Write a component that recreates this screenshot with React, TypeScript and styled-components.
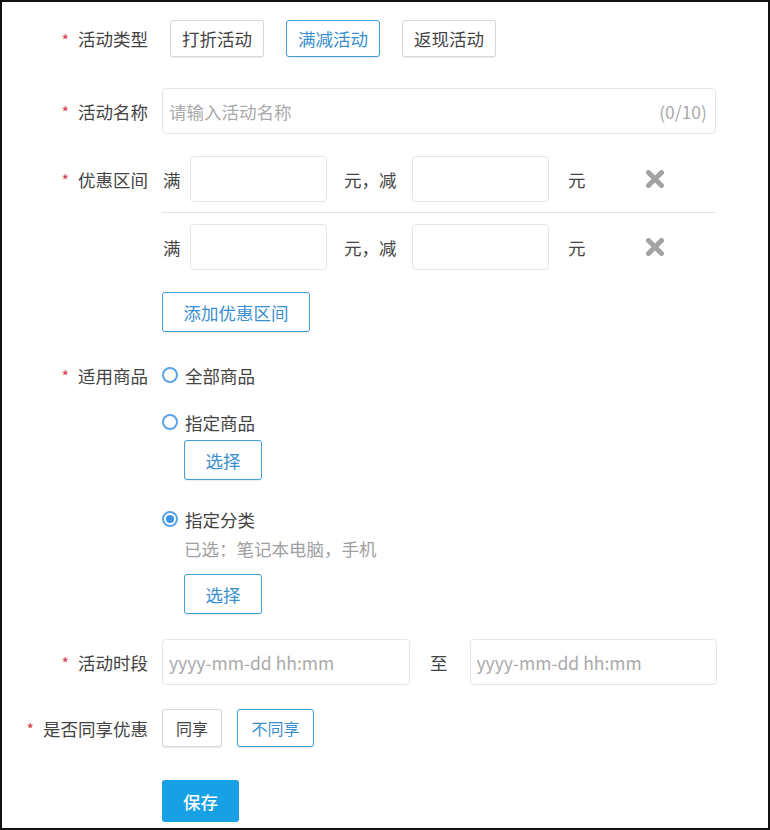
import styled, { createGlobalStyle } from "styled-components";

const GlobalStyle = createGlobalStyle`
  html, body {
    margin: 0;
    padding: 0;
    background: #fff;
  }
  body {
    font-family: "Noto Sans CJK SC", "Noto Sans", sans-serif;
    color: #444;
  }
  * {
    box-sizing: border-box;
  }
`;

const Frame = styled.div`
  width: 770px;
  height: 830px;
  border: 2px solid #111;
  padding-top: 18px;
  background: #fff;
`;

const FormItem = styled.div<{ $mb: number }>`
  display: flex;
  align-items: flex-start;
  margin-bottom: ${(p) => p.$mb}px;
`;

const Label = styled.div<{ $h: number }>`
  width: 146px;
  height: ${(p) => p.$h}px;
  margin-right: 14px;
  display: flex;
  align-items: center;
  justify-content: flex-end;
  font-size: 17.5px;
  color: #444;
  white-space: nowrap;
  flex-shrink: 0;
`;

const Star = styled.span`
  color: #d2414b;
  font-size: 16px;
  line-height: 1;
  margin-right: 9px;
  padding-top: 2px;
`;

const Control = styled.div`
  width: 554px;
  display: flex;
  flex-direction: column;
  align-items: flex-start;
`;

const ButtonGroup = styled.div<{ $gap: number; $pl?: number }>`
  display: flex;
  gap: ${(p) => p.$gap}px;
  padding-left: ${(p) => p.$pl || 0}px;
`;

const Button = styled.button<{ $w: number; $h: number; $active?: boolean; $fs?: number; $mt?: number }>`
  width: ${(p) => p.$w}px;
  height: ${(p) => p.$h}px;
  margin-top: ${(p) => p.$mt || 0}px;
  padding: 0;
  font-family: inherit;
  font-size: ${(p) => p.$fs || 17.5}px;
  background: #fff;
  color: ${(p) => (p.$active ? "#3a8fcf" : "#444")};
  border: 1px solid ${(p) => (p.$active ? "#3c9fd6" : "#d6d6d6")};
  border-radius: 3px;
  box-shadow: 0 1px 1px rgba(0, 0, 0, 0.08);
  cursor: pointer;
`;

const PrimaryButton = styled.button`
  width: 77px;
  height: 42px;
  padding: 0;
  font-family: inherit;
  font-size: 17.5px;
  font-weight: 500;
  color: #fff;
  background: #17a0e4;
  border: none;
  border-radius: 3px;
  cursor: pointer;
`;

const InputBox = styled.div<{ $w: number }>`
  width: ${(p) => p.$w}px;
  height: 46px;
  display: flex;
  align-items: center;
  border: 1px solid #e6e6e6;
  border-radius: 4px;
  background: #fff;
  padding: 0 8px 0 6px;
  flex-shrink: 0;
`;

const TextInput = styled.input`
  flex: 1;
  min-width: 0;
  height: 100%;
  border: none;
  outline: none;
  padding: 0;
  font-family: inherit;
  font-size: 17.5px;
  color: #444;
  background: transparent;
  &::placeholder {
    color: #aaa;
  }
`;

const Counter = styled.span`
  font-size: 17.5px;
  color: #aaa;
`;

const RangeRow = styled.div<{ $divider?: boolean }>`
  width: 554px;
  display: flex;
  align-items: center;
  padding-bottom: ${(p) => (p.$divider ? 10 : 0)}px;
  margin-bottom: ${(p) => (p.$divider ? 11 : 0)}px;
  border-bottom: ${(p) => (p.$divider ? "1px solid #e4e4e4" : "none")};
`;

const Unit = styled.span<{ $w: number; $pl: number }>`
  width: ${(p) => p.$w}px;
  padding-left: ${(p) => p.$pl}px;
  font-size: 17.5px;
  color: #444;
  white-space: nowrap;
  flex-shrink: 0;
`;

const RemoveIcon = styled.svg`
  width: 20px;
  height: 18px;
  cursor: pointer;
`;

const RadioLine = styled.label<{ $mt?: number }>`
  display: flex;
  align-items: center;
  height: 24px;
  margin-top: ${(p) => p.$mt || 0}px;
  font-size: 17.5px;
  color: #444;
  cursor: pointer;
`;

const RadioCircle = styled.span<{ $checked?: boolean }>`
  width: 16px;
  height: 16px;
  margin-right: 7px;
  border: 2px solid #5aa5e6;
  border-radius: 50%;
  display: flex;
  align-items: center;
  justify-content: center;
  &::after {
    content: "";
    width: 8px;
    height: 8px;
    border-radius: 50%;
    background: #3d95e6;
    display: ${(p) => (p.$checked ? "block" : "none")};
  }
`;

const SubBlock = styled.div`
  padding-left: 22px;
  display: flex;
  flex-direction: column;
  align-items: flex-start;
`;

const Hint = styled.div`
  margin-top: 7px;
  font-size: 17.5px;
  line-height: 22px;
  color: #a0a0a0;
`;

const DateRow = styled.div`
  display: flex;
  align-items: center;
`;

const DateSep = styled.span`
  padding: 0 22px 0 20px;
  font-size: 17.5px;
  color: #444;
`;

const Cross = () => (
  <RemoveIcon viewBox="0 0 20 18">
    <path d="M3.5 2.5 L16.5 15.5 M16.5 2.5 L3.5 15.5" stroke="#a3a3a3" strokeWidth="5" strokeLinecap="round" />
  </RemoveIcon>
);

const Range = ({ divider }: { divider?: boolean }) => (
  <RangeRow $divider={divider}>
    <Unit $w={28} $pl={1}>满</Unit>
    <InputBox $w={137}>
      <TextInput />
    </InputBox>
    <Unit $w={85} $pl={17}>元，减</Unit>
    <InputBox $w={137}>
      <TextInput />
    </InputBox>
    <Unit $w={96} $pl={19}>元</Unit>
    <Cross />
  </RangeRow>
);

const App = () => {
  return (
    <Frame>
      <GlobalStyle />
      <FormItem $mb={31}>
        <Label $h={37}>
          <Star>*</Star>活动类型
        </Label>
        <ButtonGroup $gap={22} $pl={8}>
          <Button $w={94} $h={37}>打折活动</Button>
          <Button $w={94} $h={37} $active>满减活动</Button>
          <Button $w={94} $h={37}>返现活动</Button>
        </ButtonGroup>
      </FormItem>

      <FormItem $mb={22}>
        <Label $h={46}>
          <Star>*</Star>活动名称
        </Label>
        <InputBox $w={554}>
          <TextInput placeholder="请输入活动名称" />
          <Counter>(0/10)</Counter>
        </InputBox>
      </FormItem>

      <FormItem $mb={31}>
        <Label $h={46}>
          <Star>*</Star>优惠区间
        </Label>
        <Control>
          <Range divider />
          <Range />
          <Button $w={148} $h={40} $mt={22} $active>添加优惠区间</Button>
        </Control>
      </FormItem>

      <FormItem $mb={25}>
        <Label $h={24}>
          <Star>*</Star>适用商品
        </Label>
        <Control>
          <RadioLine>
            <RadioCircle />
            全部商品
          </RadioLine>
          <RadioLine $mt={23}>
            <RadioCircle />
            指定商品
          </RadioLine>
          <SubBlock>
            <Button $w={78} $h={40} $mt={6} $active>选择</Button>
          </SubBlock>
          <RadioLine $mt={27}>
            <RadioCircle $checked />
            指定分类
          </RadioLine>
          <SubBlock>
            <Hint>已选：笔记本电脑，手机</Hint>
            <Button $w={78} $h={40} $mt={14} $active>选择</Button>
          </SubBlock>
        </Control>
      </FormItem>

      <FormItem $mb={24}>
        <Label $h={46}>
          <Star>*</Star>活动时段
        </Label>
        <DateRow>
          <InputBox $w={248}>
            <TextInput placeholder="yyyy-mm-dd hh:mm" />
          </InputBox>
          <DateSep>至</DateSep>
          <InputBox $w={247}>
            <TextInput placeholder="yyyy-mm-dd hh:mm" />
          </InputBox>
        </DateRow>
      </FormItem>

      <FormItem $mb={33}>
        <Label $h={38}>
          <Star>*</Star>是否同享优惠
        </Label>
        <ButtonGroup $gap={15}>
          <Button $w={60} $h={38} $fs={16}>同享</Button>
          <Button $w={77} $h={38} $fs={16} $active>不同享</Button>
        </ButtonGroup>
      </FormItem>

      <FormItem $mb={0}>
        <Label $h={42} />
        <PrimaryButton>保存</PrimaryButton>
      </FormItem>
    </Frame>
  );
};

export default App;
